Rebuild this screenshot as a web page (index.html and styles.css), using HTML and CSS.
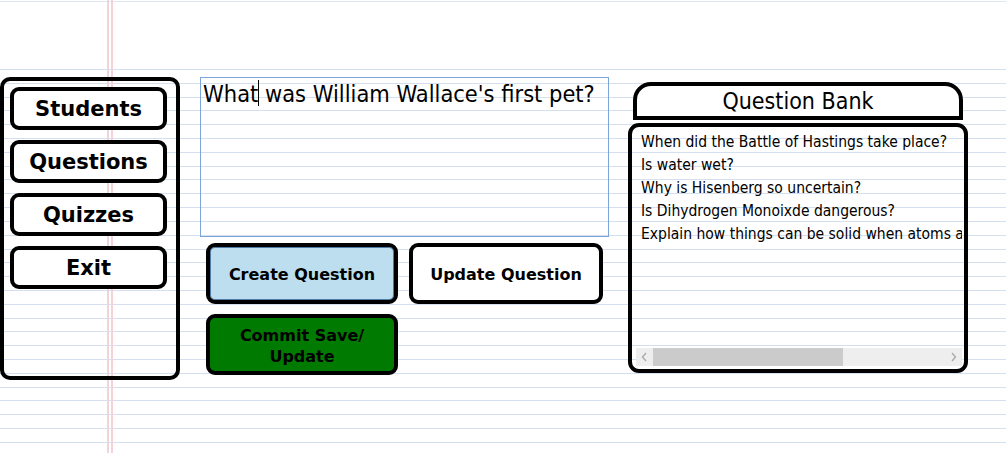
FILE: index.html
```html
<!DOCTYPE html>
<html lang="en">
<head>
<meta charset="utf-8">
<title>Question Editor</title>
<link rel="stylesheet" href="styles.css">
</head>
<body>
<div class="page">
  <nav class="sidebar">
    <div class="nav-btn">Students</div>
    <div class="nav-btn">Questions</div>
    <div class="nav-btn">Quizzes</div>
    <div class="nav-btn">Exit</div>
  </nav>
  <main class="editor">
    <div class="question-input">What<span class="caret"></span> was William Wallace's first pet?</div>
    <div class="actions">
      <div class="action create">Create Question</div>
      <div class="action update">Update Question</div>
      <div class="action commit">Commit Save/<br>Update</div>
    </div>
  </main>
  <section class="bank">
    <h2 class="bank-title">Question Bank</h2>
    <div class="bank-list">
      <ul class="items">
        <li>When did the Battle of Hastings take place?</li>
        <li>Is water wet?</li>
        <li>Why is Hisenberg so uncertain?</li>
        <li>Is Dihydrogen Monoixde dangerous?</li>
        <li>Explain how things can be solid when atoms are mostly empty space?</li>
      </ul>
      <div class="hscroll">
        <span class="arrow"><svg width="7" height="10" viewBox="0 0 7 10"><polyline points="5,1 1.5,5 5,9" fill="none" stroke="#a8a8a8" stroke-width="1.3"/></svg></span>
        <span class="thumb"></span>
        <span class="track"></span>
        <span class="arrow"><svg width="7" height="10" viewBox="0 0 7 10"><polyline points="2,1 5.5,5 2,9" fill="none" stroke="#a8a8a8" stroke-width="1.3"/></svg></span>
      </div>
    </div>
  </section>
</div>
</body>
</html>
```

FILE: styles.css
```css
html, body {
  margin: 0;
  padding: 0;
  background: #fff;
}

.page {
  width: 1006px;
  height: 453px;
  box-sizing: border-box;
  padding-top: 77px;
  display: flex;
  align-items: flex-start;
  overflow: hidden;
  background-image:
    linear-gradient(to right, transparent 107px, #f3d3d8 107px, #f3d3d8 109px, transparent 109px, transparent 111px, #f3d3d8 111px, #f3d3d8 113px, transparent 113px),
    linear-gradient(to bottom, #dde6f3 0, #dde6f3 1px, transparent 1px),
    repeating-linear-gradient(to bottom, #d4e0ef 0, #d4e0ef 1px, transparent 1px, transparent 13.81px);
  background-repeat: no-repeat, no-repeat, no-repeat;
  background-size: 100% 100%, 100% 2px, 100% 400px;
  background-position: 0 0, 0 1px, 0 69px;
}

/* Sidebar */
.sidebar {
  width: 180px;
  height: 303px;
  box-sizing: border-box;
  border: 4px solid #000;
  border-radius: 10px;
  padding: 6px;
  display: flex;
  flex-direction: column;
  gap: 10px;
}

.nav-btn {
  width: 157px;
  height: 43px;
  box-sizing: border-box;
  border: 4px solid #000;
  border-radius: 9px;
  background: #fff;
  display: flex;
  align-items: center;
  justify-content: center;
  padding-top: 1px;
  font: bold 21px "DejaVu Sans", sans-serif;
  color: #000;
}

/* Editor */
.editor {
  width: 409px;
  margin-left: 20px;
}

.question-input {
  height: 160px;
  box-sizing: border-box;
  border: 1px solid #7ca6da;
  padding: 2px 3px 2px 2px;
  font: 23.4px "DejaVu Sans Condensed", "DejaVu Sans", sans-serif;
  color: #000;
  white-space: nowrap;
}

.caret {
  display: inline-block;
  width: 1px;
  height: 26px;
  margin-right: -1px;
  background: #000;
  vertical-align: -4px;
}

.actions {
  display: grid;
  grid-template-columns: 192px 194px;
  grid-auto-rows: 61px;
  column-gap: 11px;
  row-gap: 10px;
  margin: 6px 0 0 6px;
}

.action {
  box-sizing: border-box;
  border: 4px solid #000;
  border-radius: 9px;
  display: flex;
  align-items: center;
  justify-content: center;
  text-align: center;
  padding-top: 2px;
  font: bold 16px "DejaVu Sans", sans-serif;
  line-height: 21px;
  color: #000;
}

.create {
  background: #bcdeee;
  box-shadow: inset 0 0 0 1px #4d7ba6;
}

.update {
  background: #fff;
}

.commit {
  background: #007a00;
}

/* Question bank */
.bank {
  width: 340px;
  margin-left: 19px;
}

.bank-title {
  margin: 5px 5px 0;
  height: 38px;
  box-sizing: border-box;
  border: 4px solid #000;
  border-radius: 18px 18px 0 0;
  background: #fff;
  padding-top: 1px;
  text-align: center;
  font: normal 23px "DejaVu Sans Condensed", "DejaVu Sans", sans-serif;
  line-height: 29px;
  color: #000;
}

.bank-list {
  margin-top: 3px;
  height: 250px;
  box-sizing: border-box;
  border: 4px solid #000;
  border-radius: 11px;
  display: flex;
  flex-direction: column;
}

.items {
  flex: 1;
  list-style: none;
  margin: 0 2px 0 0;
  padding: 4px 0 0 9px;
  overflow: hidden;
  white-space: nowrap;
  font: 15.5px "DejaVu Sans Condensed", "DejaVu Sans", sans-serif;
  line-height: 23px;
  color: #000;
}

.hscroll {
  height: 18px;
  margin: 0 2px 3px 4px;
  background: #eeeeee;
  display: flex;
  align-items: stretch;
}

.arrow {
  width: 17px;
  display: flex;
  align-items: center;
  justify-content: center;
}

.thumb {
  width: 190px;
  background: #cbcbcb;
}

.track {
  flex: 1;
}
```
